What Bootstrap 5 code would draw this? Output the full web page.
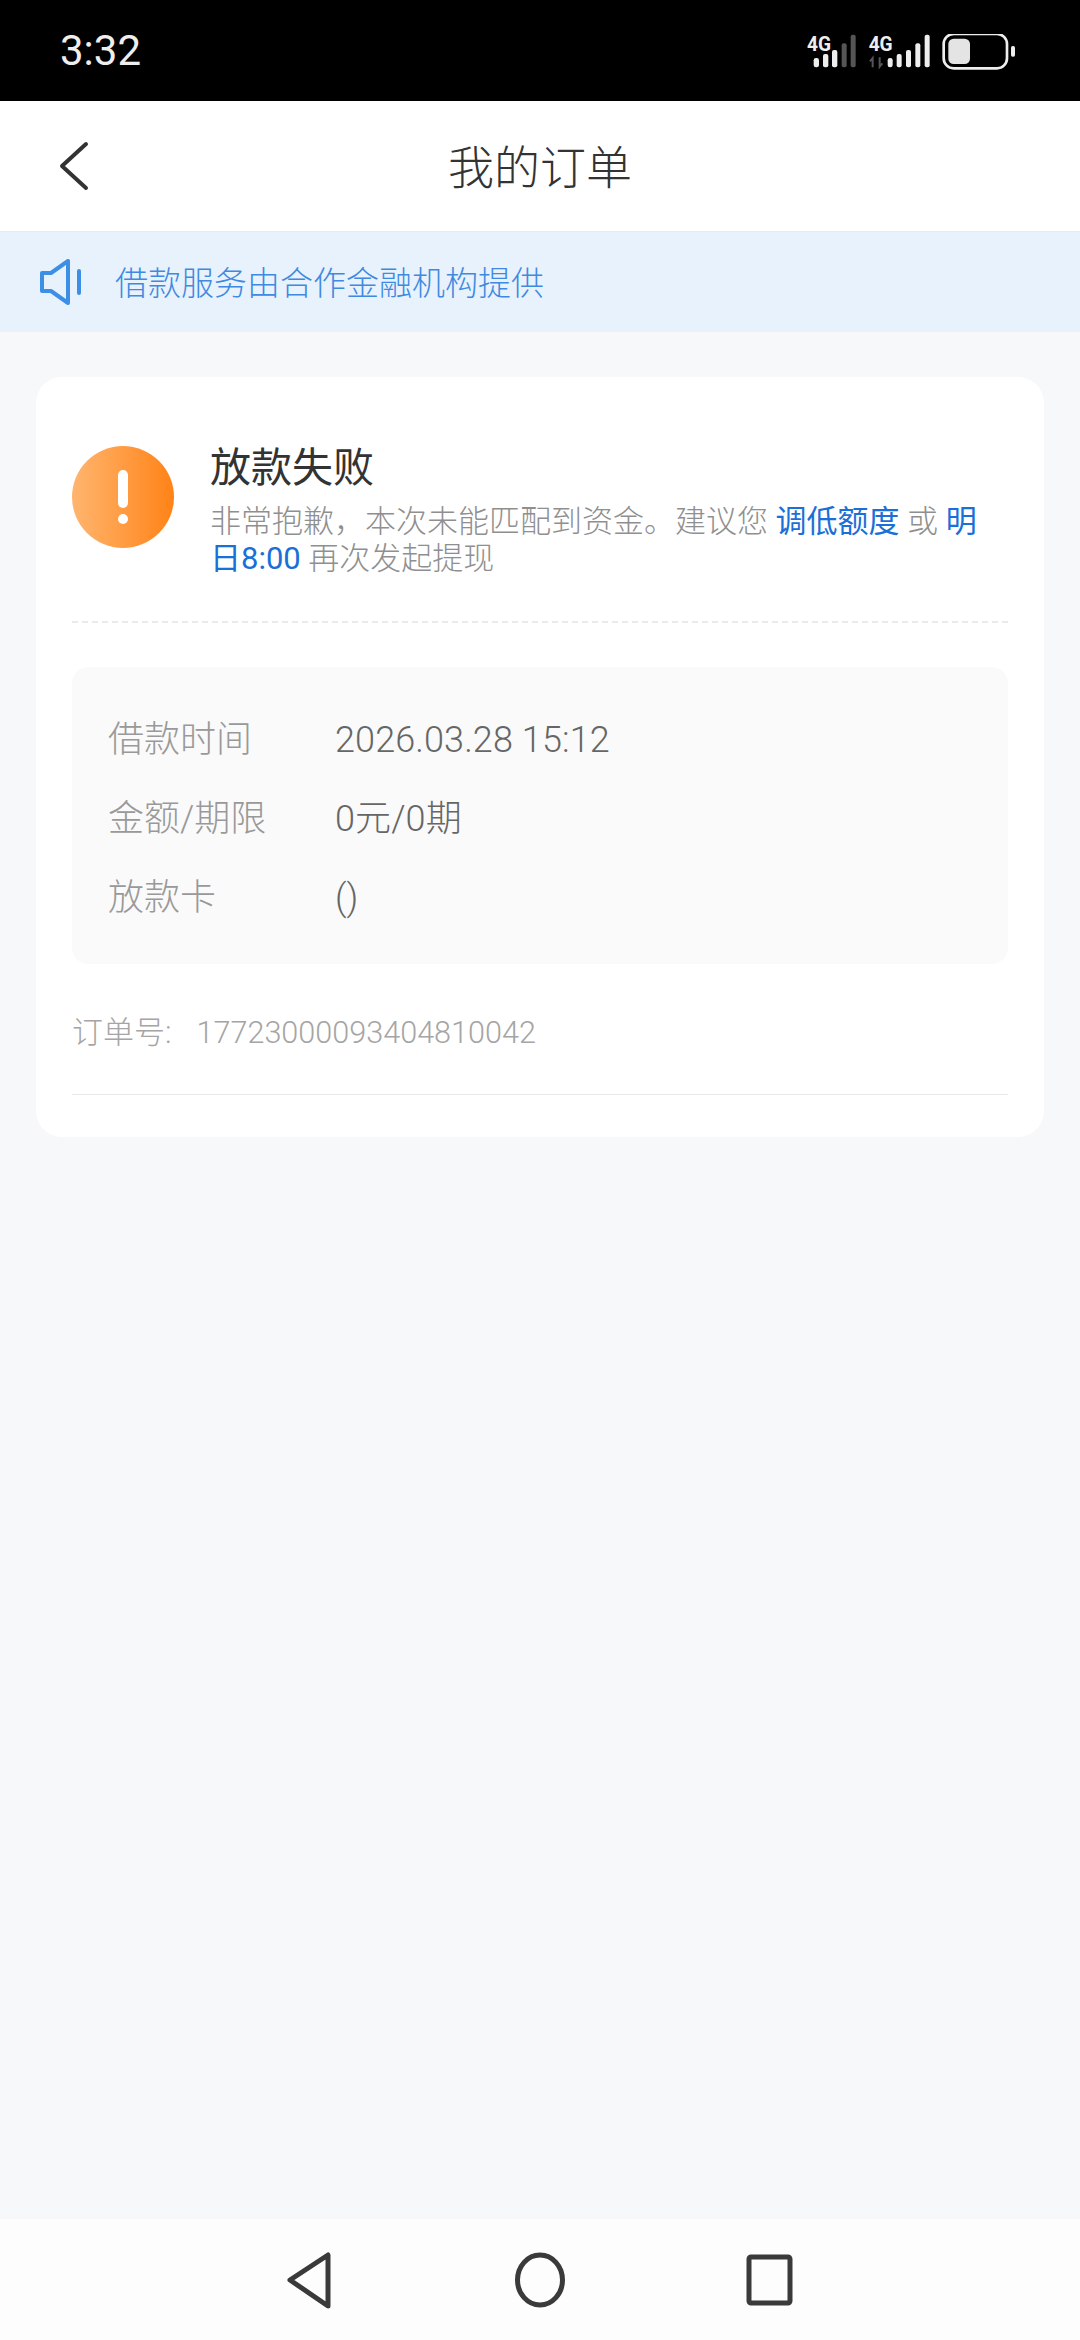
<!DOCTYPE html>
<html lang="zh-CN">
<head>
    <meta charset="UTF-8">
    <meta name="viewport" content="width=device-width, initial-scale=1.0">
    <title>我的订单</title>
    <link href="https://cdn.jsdelivr.net/npm/bootstrap@5.3.0/dist/css/bootstrap.min.css" rel="stylesheet">
    <style>
        body { background: #f7f8fa; font-family: Roboto, "Noto Sans CJK SC", sans-serif; font-weight: 300; height: 2340px; }
        .status-bar { background: #000; height: 101px; color: #eee; padding: 0 60px; }
        .status-time { font-size: 42px; line-height: 1; font-weight: 400; }
        .status-icons { margin-top: 6px; }
        .page-head { background: #fff; height: 131px; border-bottom: 1px solid #e6e9ee; }
        .page-head svg { position: absolute; left: 58px; top: 40px; }
        .page-title { font-size: 46px; color: #333; line-height: 1; padding-top: 3px; }
        .notice-bar { background: #e8f2fd; height: 100px; padding-left: 40px; color: #3f8ae0; font-size: 33px; }
        .notice-bar svg { margin-right: 33px; }
        .notice-bar span { padding-top: 4px; }
        .order-box { background: #fff; margin: 45px 36px 0; height: 760px; border-radius: 26px; padding: 0 36px; }
        .result-row { padding-top: 69px; height: 246px; border-bottom: 2px dashed #e8eaed; }
        .warn-dot { width: 102px; height: 102px; border-radius: 50%; background: linear-gradient(90deg, #ffb56f, #ff8317); margin-right: 36px; }
        .warn-dot i { display: block; width: 10px; height: 38px; border-radius: 5px; background: #fff; }
        .warn-dot b { display: block; width: 10px; height: 10px; border-radius: 50%; background: #fff; margin-top: 6px; }
        .result-title { font-size: 41px; line-height: 40px; color: #333; font-weight: 400; margin-top: 2px; margin-bottom: 15px; }
        .result-text { font-size: 31px; line-height: 37px; color: #8f8f8f; padding-right: 12px; }
        .result-text span { color: #1a6fd8; font-weight: 400; }
        .info-panel { background: #fafafa; border-radius: 16px; margin-top: 44px; height: 297px; padding: 33px 36px 0; }
        .info-line { height: 79px; font-size: 36px; }
        .info-name { width: 227px; color: #999; }
        .info-val { color: #666; letter-spacing: .1px; }
        .order-no { font-size: 31px; color: #a5a5a5; height: 131px; padding-top: 46px; border-bottom: 1px solid #e8e8e8; }
        .order-no em { font-style: normal; margin-left: 25px; font-size: 30.6px; }
        .main-fill { flex: 1 1 auto; }
        .nav-keys { background: #fdfdfd; height: 121px; position: relative; }
        .nav-keys svg { position: absolute; left: 0; top: 1px; }
    </style>
</head>
<body class="d-flex flex-column">

    <div class="status-bar d-flex align-items-center justify-content-between">
        <div class="status-time">3:32</div>
        <svg class="status-icons" width="213" height="40" viewBox="0 0 639 120">
            <g fill="#eee">
                <text x="0" y="52" font-family="Roboto, sans-serif" font-size="58" font-weight="700" textLength="72" lengthAdjust="spacingAndGlyphs">4G</text>
                <rect x="20" y="72" width="16" height="28" rx="7"/>
                <rect x="48" y="60" width="16" height="40" rx="6"/>
                <rect x="75" y="48" width="16" height="52" rx="6"/>
                <rect x="104" y="28" width="15" height="72" rx="6" fill="#555"/>
                <rect x="131" y="2" width="15" height="98" rx="6" fill="#555"/>
                <text x="185" y="52" font-family="Roboto, sans-serif" font-size="58" font-weight="700" textLength="72" lengthAdjust="spacingAndGlyphs">4G</text>
                <path d="M197 100V72l-8 10M218 70v28l8-10" fill="none" stroke="#555" stroke-width="6"/>
                <rect x="242" y="72" width="15" height="28" rx="7"/>
                <rect x="269" y="60" width="15" height="40" rx="6"/>
                <rect x="297" y="48" width="15" height="52" rx="6"/>
                <rect x="325" y="28" width="15" height="72" rx="6"/>
                <rect x="353" y="2" width="15" height="98" rx="6"/>
                <rect x="410" y="0" width="190" height="103" rx="30" fill="none" stroke="#eee" stroke-width="8"/>
                <rect x="424" y="14" width="65" height="76" rx="16" fill="#e4e4e4"/>
                <rect x="612" y="36" width="12" height="32" rx="5"/>
            </g>
        </svg>
    </div>

    <div class="page-head d-flex align-items-center justify-content-center position-relative">
        <svg width="32" height="50" viewBox="0 0 32 50"><path d="M28 3 4 25l24 22" fill="none" stroke="#333" stroke-width="4" stroke-linecap="round" stroke-linejoin="round"/></svg>
        <div class="page-title">我的订单</div>
    </div>

    <div class="notice-bar d-flex align-items-center">
        <svg width="42" height="46" viewBox="0 0 42 46"><path d="M2 14h9L28 2v42L11 32H2z" fill="none" stroke="#3d8fe6" stroke-width="4" stroke-linejoin="round"/><path d="M39 12v22" stroke="#3d8fe6" stroke-width="4" stroke-linecap="round"/></svg>
        <span>借款服务由合作金融机构提供</span>
    </div>

    <div class="order-box">
        <div class="result-row d-flex align-items-start">
            <div class="warn-dot d-flex flex-column align-items-center justify-content-center flex-shrink-0"><i></i><b></b></div>
            <div>
                <div class="result-title">放款失败</div>
                <div class="result-text">非常抱歉，本次未能匹配到资金。建议您 <span>调低额度</span> 或 <span>明日8:00</span> 再次发起提现</div>
            </div>
        </div>

        <div class="info-panel">
            <div class="info-line d-flex align-items-center"><div class="info-name">借款时间</div><div class="info-val">2026.03.28 15:12</div></div>
            <div class="info-line d-flex align-items-center"><div class="info-name">金额/期限</div><div class="info-val">0元/0期</div></div>
            <div class="info-line d-flex align-items-center"><div class="info-name">放款卡</div><div class="info-val">()</div></div>
        </div>

        <div class="order-no">订单号:<em>17723000093404810042</em></div>
    </div>

    <div class="main-fill"></div>

    <div class="nav-keys">
        <svg width="1080" height="120" viewBox="0 0 1080 120" fill="none" stroke="#3a3a3a" stroke-width="5" stroke-linejoin="round">
            <path d="M290 60 328 35V86z" stroke-width="5"/>
            <ellipse cx="540" cy="60" rx="22.500" ry="25"/>
            <rect x="749" y="37" width="41" height="46" rx="2" stroke-width="5"/>
        </svg>
    </div>

    <script src="https://cdn.jsdelivr.net/npm/bootstrap@5.3.0/dist/js/bootstrap.bundle.min.js"></script>
</body>
</html>
